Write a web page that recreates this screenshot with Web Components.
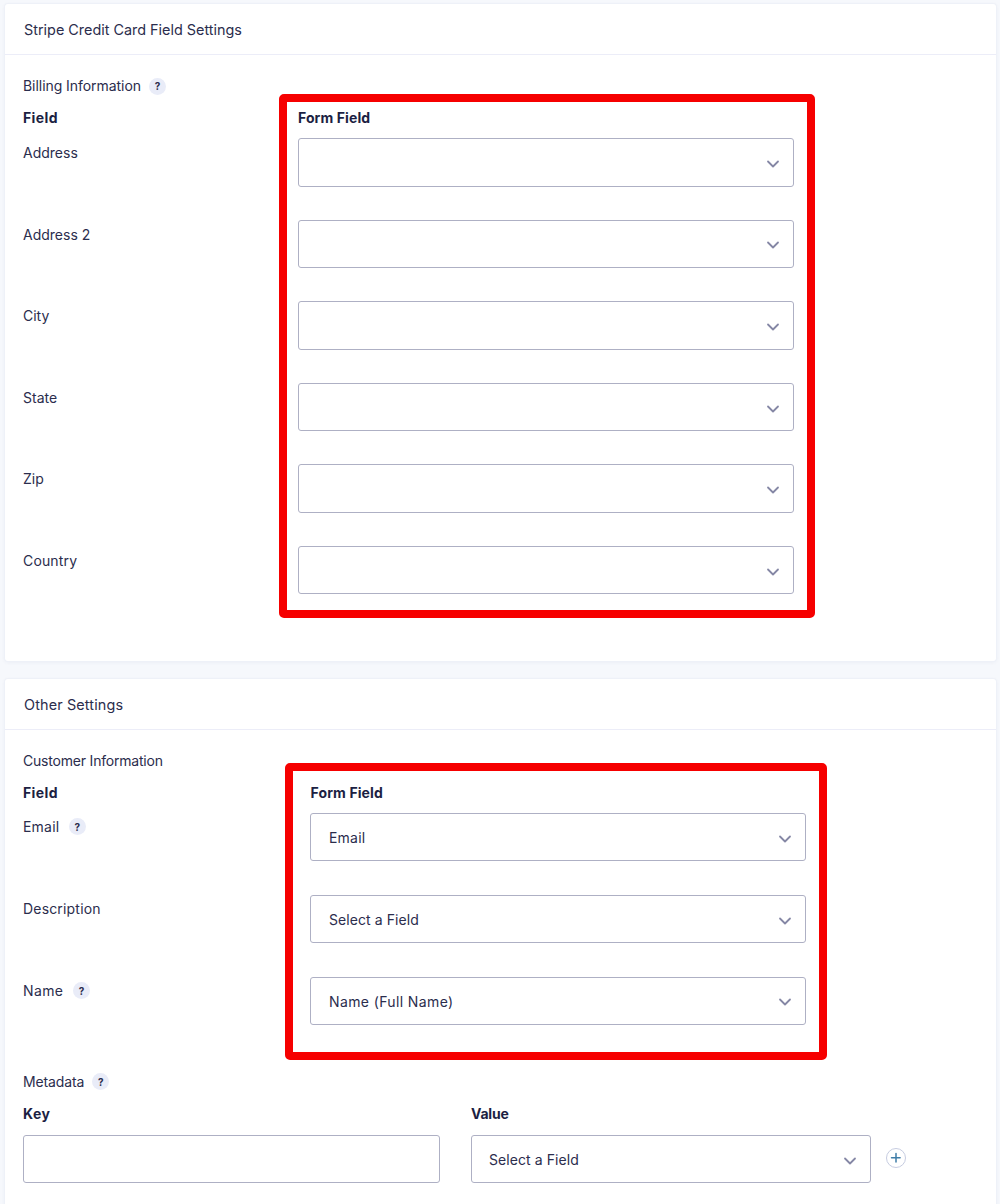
<!DOCTYPE html>
<html lang="en"><head><meta charset="utf-8"><title>Stripe Credit Card Field Settings</title>
<style>
html,body{margin:0;height:1204px;overflow:hidden;background:#f6f8fc}
body{font:400 14px/20px "Inter","Noto Sans",sans-serif;color:#2b2d4d;padding:4px 4px 0 5px;box-sizing:border-box;display:flex;flex-direction:column;gap:18px}
gf-card{flex:none}
</style></head><body>
<template id="t-card"><style>
:host{display:block;background:#fff;border-radius:3px;box-shadow:0 0 0 1px #eef1f8,0 1px 4px rgba(40,60,120,.07)}
header{height:51px;box-sizing:border-box;padding:2px 19px 0;display:flex;align-items:center;border-bottom:1px solid #ecedf8;font-size:14.4px;color:#2b2d4d}
.b{padding:21px 18px var(--pb,33.4px);display:flex;flex-direction:column}
</style><header><slot name="title"></slot></header><div class="b"><slot></slot></div></template>

<template id="t-help"><style>
:host{display:inline-flex;width:17px;height:17px;border-radius:50%;background:#e9ecf8;color:#2b2d4d;font-size:10px;font-weight:700;letter-spacing:0;align-items:center;justify-content:center;line-height:1;margin-left:8px}
</style>?</template>

<template id="t-label"><style>
:host{display:flex;align-items:center;height:20px;color:#2b2d4d;font-size:14px}
:host([bold]){font-weight:700;color:#1c1f43}
:host([cell]){margin-top:var(--cm,5px)}
</style><slot></slot></template>

<template id="t-select"><style>
:host{display:flex;align-items:center;justify-content:space-between;box-sizing:border-box;height:48.5px;width:var(--w,496px);padding:2px 13px 0 var(--pl,18px);background:#fff;border:1px solid #aeb0c4;border-radius:3px;font-size:14px;color:#2b2d4d}
svg{width:14px;height:8px;flex:none;margin-top:1px}
</style><span><slot></slot></span><svg viewBox="0 0 14 8" fill="none" stroke="#8587a5" stroke-width="1.8" stroke-linecap="round" stroke-linejoin="round"><path d="M2 1.500 7 6.500 12 1.500"/></svg></template>

<template id="t-map"><style>
:host{display:grid;position:relative;grid-template-columns:var(--c1) 496px;grid-template-rows:30px;grid-auto-rows:var(--r,81.6px);margin-top:12px}
.mark{position:absolute;box-sizing:border-box;border:8px solid #f60000;border-radius:5px;pointer-events:none;left:var(--ml);width:var(--mw);top:var(--mt);height:var(--mh)}
</style><slot></slot><div class="mark"></div></template>

<template id="t-field"><style>
:host{display:flex;flex-direction:column;gap:var(--g,11px);width:var(--w)}
</style><slot></slot></template>

<template id="t-row"><style>
:host{display:flex;align-items:flex-start;margin-top:12px}
</style><slot></slot></template>

<template id="t-plus"><style>
:host{display:block;width:20px;height:20px;margin:44.5px 0 0 14.7px}
svg{display:block}
</style><svg width="20" height="20" viewBox="0 0 20 20" fill="none"><circle cx="10" cy="10" r="9.500" stroke="#c6cce0"/><path d="M10 5.500v8.600M5.500 9.800h8.600" stroke="#3f7ea8" stroke-width="1.500" stroke-linecap="round"/></svg></template>

<template id="t-input"><style>
:host{display:block;box-sizing:border-box;height:48.5px;width:var(--w);background:#fff;border:1px solid #aeb0c4;border-radius:3px}
</style></template>

<gf-card>
  <span slot="title">Stripe Credit Card Field Settings</span>
  <gf-label style="letter-spacing:-.05px">Billing Information<gf-help></gf-help></gf-label>
  <gf-map style="--c1:275px;--ml:256px;--mw:536px;--mt:-14px;--mh:524px">
    <gf-label bold style="letter-spacing:.4px">Field</gf-label><gf-label bold style="letter-spacing:.1px">Form Field</gf-label>
    <gf-label cell>Address</gf-label><gf-select></gf-select>
    <gf-label cell>Address 2</gf-label><gf-select></gf-select>
    <gf-label cell>City</gf-label><gf-select></gf-select>
    <gf-label cell>State</gf-label><gf-select></gf-select>
    <gf-label cell>Zip</gf-label><gf-select></gf-select>
    <gf-label cell style="letter-spacing:.15px">Country</gf-label><gf-select></gf-select>
  </gf-map>
</gf-card>
<gf-card style="--pb:60px">
  <span slot="title" style="letter-spacing:.14px">Other Settings</span>
  <gf-label style="letter-spacing:-.2px">Customer Information</gf-label>
  <gf-map style="--r:81.8px;--cm:4px;--c1:287px;--ml:262px;--mw:542px;--mt:-20px;--mh:297px">
    <gf-label bold style="letter-spacing:.4px">Field</gf-label><gf-label bold style="letter-spacing:.1px;padding-left:.6px">Form Field</gf-label>
    <gf-label cell style="letter-spacing:.2px">Email<gf-help style="margin-left:9.5px"></gf-help></gf-label><gf-select style="letter-spacing:.2px">Email</gf-select>
    <gf-label cell style="letter-spacing:.18px">Description</gf-label><gf-select style="letter-spacing:.07px">Select a Field</gf-select>
    <gf-label cell style="letter-spacing:.4px">Name<gf-help style="margin-left:9.5px"></gf-help></gf-label><gf-select style="letter-spacing:.38px">Name (Full Name)</gf-select>
  </gf-map>
  <gf-label style="margin-top:13.6px;letter-spacing:-.12px">Metadata<gf-help></gf-help></gf-label>
  <gf-row>
    <gf-field style="--w:417px;margin-right:31px"><gf-label bold style="letter-spacing:.5px">Key</gf-label><gf-input style="--w:417px"></gf-input></gf-field>
    <gf-field style="--w:400px"><gf-label bold style="letter-spacing:-.2px">Value</gf-label><gf-select style="--w:400px;--pl:17px;letter-spacing:.07px">Select a Field</gf-select></gf-field>
    <gf-plus></gf-plus>
  </gf-row>
</gf-card>
<script>
const def=(n,t)=>customElements.define(n,class extends HTMLElement{constructor(){super();this.attachShadow({mode:'open'}).append(document.getElementById(t).content.cloneNode(true))}});
[['gf-card','t-card'],['gf-help','t-help'],['gf-label','t-label'],['gf-select','t-select'],['gf-map','t-map'],['gf-field','t-field'],['gf-row','t-row'],['gf-plus','t-plus'],['gf-input','t-input']].forEach(a=>def(...a));
</script>
</body></html>
